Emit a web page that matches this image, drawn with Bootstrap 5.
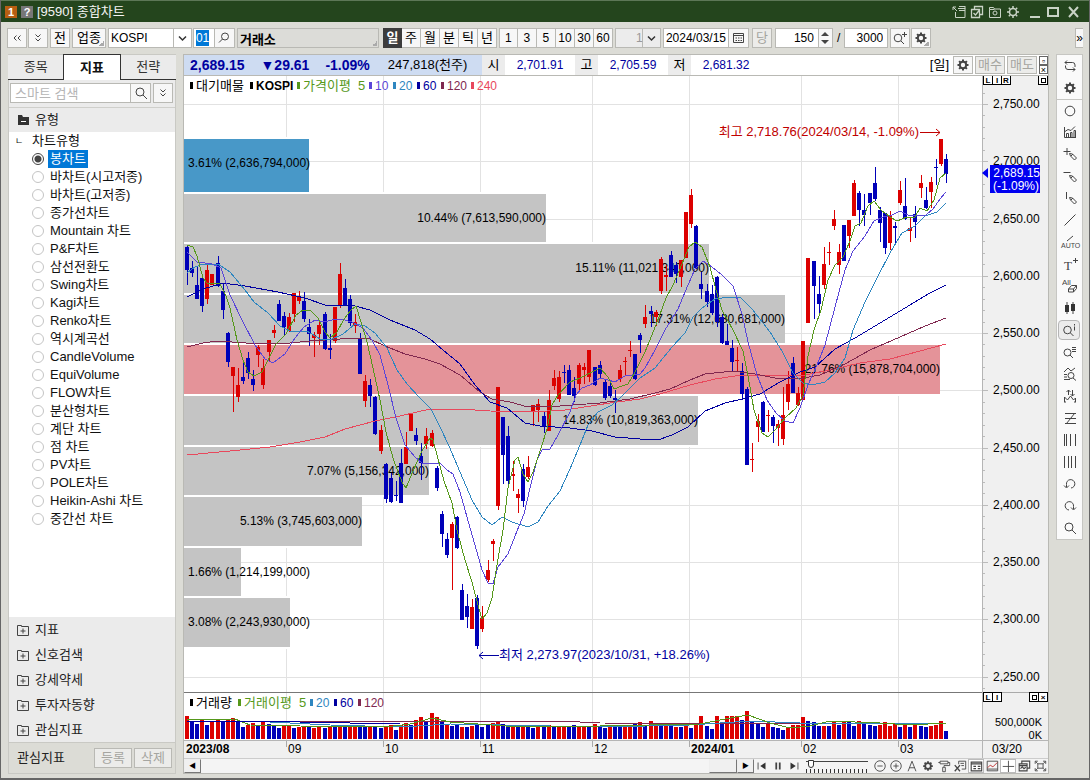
<!DOCTYPE html>
<html lang="ko">
<head>
<meta charset="utf-8">
<meta name="viewport" content="width=device-width, initial-scale=1">
<title>[9590] 종합차트</title>
<link href="https://cdn.jsdelivr.net/npm/bootstrap@5.3.0/dist/css/bootstrap.min.css" rel="stylesheet">
<style>
  :root { --face: #dcdcd6; --line: #b9b9b4; --navy: #0000a0; }
  body { background: var(--face); color: #000; min-height: 100vh; font: 13px/16px "Liberation Sans", "Noto Sans CJK KR", sans-serif; border: solid #666; border-width: 0 1px 2px 1px; }
  button, input, select { font: inherit; color: inherit; border-radius: 0; }
  svg { display: block; }
  .ico { width: 16px; height: 16px; fill: none; stroke: #444; stroke-width: 1; flex: none; }
  .titlebar { background: #24451d; height: 22px; border-top: 1px solid #5d7757; color: #f4f4f4; }
  .titlebar .ico { stroke: #c9d3c6; }
  .wins { gap: 2px; }
  .wins .wide { margin-left: 2px; }
  .titlebar button, .rail button, .plainbtn { background: none; border: 0; padding: 0; display: flex; align-items: center; justify-content: center; }
  .sq { width: 12px; height: 12px; font: bold 11px/12px "Liberation Sans", sans-serif; text-align: center; color: #fff; background: #777; }
  .sq.no { background: #b85f12; }
  .tools { height: 32px; font-size: 12px; padding-left: 6px; }
  .tb { height: 20px; min-width: 20px; padding: 0; border: 1px solid var(--line); background: #f7f7f7; display: flex; align-items: center; justify-content: center; line-height: 16px; flex: none; }
  .tb.ko { font-size: 13px; }
  .tb.slim { min-width: 14px; width: 14px; }
  .tb.joined { border-left: 0; }
  .gap-r1 { margin-right: 1px; }
  .gap-r2 { margin-right: 2px; }
  .gap-r3 { margin-right: 3px; }
  .w30 { width: 30px; } .w38 { width: 38px; } .w44 { width: 44px; } .w66 { width: 66px; }
  .seg .tb { width: 19px; min-width: 19px; border-left-width: 0; }
  .seg .tb:first-child { border-left-width: 1px; }
  .seg .tb.on { background: #3c3c3c; color: #fff; font-weight: bold; border-color: #3c3c3c; }
  .corner { background-image: linear-gradient(135deg, transparent 50%, #aaa 50%); background-size: 5px 5px; background-position: right 1px bottom 1px; background-repeat: no-repeat; }
  .fld { height: 20px; border: 1px solid var(--line); background-color: #fff; padding: 0 2px; min-width: 0; outline: 0; line-height: 16px; }
  .code { width: 22px; }
  .code span { background: #0078d7; color: #fff; }
  .market { width: 142px; background-color: #dcdcd8; font-size: 13px; margin-right: 4px; }
  .drop { appearance: none; background: #fff url("data:image/svg+xml,%3Csvg xmlns='http://www.w3.org/2000/svg' width='18' height='18'%3E%3Cpath d='M.5 0V18' stroke='%23b9b9b4'/%3E%3Cpath d='M6 7.500l3.500 3.500 3.500-3.500' fill='none' stroke='%23333' stroke-width='1.500'/%3E%3C/svg%3E") right center no-repeat; }
  .drop.symbol { width: 84px; }
  .drop.unit { width: 46px; background-color: #ececec; color: #999; padding-left: 20px; }
  .side { width: 168px; flex: none; background: #ebebeb; border: 1px solid #c9c9c4; color: #222; }
  .tabs { height: 26px; border-top: 1px solid #c9c9c4; margin: -1px -1px 0; }
  .tabs button { flex: 1; border: 0; border-bottom: 1px solid #333; background: #ebebeb; padding: 0; color: #333; }
  .tabs .on { background: #fff; border: 1px solid #333; border-bottom: 0; font-weight: bold; color: #111; margin-top: -1px; }
  .find { height: 27px; padding: 3px 1px 0; }
  .find ::placeholder { color: #b5b5b5; opacity: 1; }
  .cat { height: 25px; border-top: 1px solid #cfcfcb; padding-left: 2px; }
  .tree { background: #fff; }
  .tree label, .tree .node { height: 18px; display: flex; align-items: center; line-height: 18px; color: #111; }
  .tree .node span { width: 23px; padding-left: 6px; font-size: 9px; }
  .tree label span { padding: 0 2px; }
  .tree input { appearance: none; width: 12px; height: 12px; border: 1px solid #c4c4c4; border-radius: 50%; margin: 0 4px 0 23px; background: #fff; }
  .tree input:checked { border-color: #444; background: radial-gradient(#444 0 3px, #fff 4px); }
  .tree input:checked + span { background: #0078d7; color: #fff; }
  .fold { height: 25px; background: none; border: 0; padding: 0 6px; color: #222; }
  .sidefoot { height: 31px; background: var(--face); border-top: 1px solid #c9c9c4; padding: 0 3px 0 8px; }
  .dim { color: #a5a5a0; background: #ececea; font-size: 13px; }
  .chartbox { border: 1px solid var(--line); background: #fff; min-width: 0; }
  .quote { height: 21px; font-size: 12px; border-bottom: 1px solid var(--line); }
  .quote .now { background: #cedcf2; color: var(--navy); width: 298px; font-size: 14px; padding-left: 6px; gap: 16px; }
  .quote .qty { color: #000; font-size: 13px; margin-left: 2px; }
  .quote .tag { background: #ececec; width: 23px; text-align: center; font-size: 13px; line-height: 20px; }
  .quote .val { width: 70px; text-align: center; color: var(--navy); }
  .quote .unitlabel { font-size: 13px; }
  .quote .tb { height: 18px; }
  .mini { width: 9px; height: 9px; padding: 0; border: 1px solid #666; background: #fff; font-size: 9px; line-height: 6px; }
  .strip { height: 15px; background: #f4f4f4; border-top: 1px solid #ccc; }
  .sbtn { height: 14px; padding: 0; background: #f0f0f0; border: 1px solid; border-color: #eee #777 #777 #eee; width: 17px; font-size: 7px; line-height: 12px; }
  .thumb { width: 28px; }
  .strip .plainbtn { width: 16px; height: 14px; }
  .strip .ico { width: 14px; height: 14px; }
  .strip .on { outline: 1px solid #bbb; outline-offset: -1px; background: #fff; }
  .zoomer { appearance: none; width: 62px; height: 14px; margin: 0 4px; background: linear-gradient(#444, #444) 0 2px / 100% 1px no-repeat, repeating-linear-gradient(90deg, #333 0 1px, transparent 1px 4px) 0 100% / 100% 4px no-repeat; }
  .zoomer::-webkit-slider-thumb { appearance: none; width: 6px; height: 8px; margin-top: -5px; background: #fff; border: 1px solid #333; border-radius: 0 0 3px 3px; }
  .rail { width: 27px; flex: none; background: #fafafa; border: 1px solid #c6c6c2; }
  .rail button { width: 25px; height: 22px; }
  .rail .on { background: #ececec; border: 1px solid #b5b5b5; border-radius: 4px; width: 22px; height: 20px; margin: 1px; }
  .rail .cut { border-top: 1px solid #c6c6c2; }
  .more { width: 8px; min-width: 8px; margin-right: 6px; border-right: 0; }
  .panes { gap: 7px; padding: 0 6px 0 7px; }
  .plot { width: 100%; height: auto; font-size: 12px; }
  .plot .crisp { shape-rendering: crispEdges; }
  .plot .b { font-weight: bold; }
  .plot .note { font-size: 13px; }
  .plot .tiny { font-size: 8px; font-weight: bold; }
  .plot .vol { font-size: 11px; }
  .ico text { font: 9px "Liberation Sans", sans-serif; fill: #444; stroke: none; }
</style>
</head>
<body class="d-flex flex-column">

<svg width="0" height="0" class="position-absolute" aria-hidden="true">
  <symbol id="gear" viewBox="0 0 16 16"><circle cx="8" cy="8" r="3.200" stroke-width="2"/><path stroke-width="2" d="M8 2.500V5M8 11v2.500M2.500 8H5M11 8h2.500M4.100 4.100l1.700 1.700M10.200 10.200l1.700 1.700M4.100 11.900l1.700-1.700M10.200 5.800l1.700-1.700"/></symbol>
  <symbol id="gearo" viewBox="0 0 16 16"><circle cx="8" cy="8" r="3.500" stroke-width="1.500"/><path stroke-width="1.500" d="M8 2v2M8 12v2M2 8h2M12 8h2M3.800 3.800l1.400 1.400M10.800 10.800l1.400 1.400M3.800 12.200l1.400-1.400M10.800 5.200l1.400-1.400"/></symbol>
  <symbol id="mag" viewBox="0 0 16 16"><circle cx="7" cy="7" r="4"/><path d="M10 10l4 4"/></symbol>
  <symbol id="magl" viewBox="0 0 16 16"><circle cx="9" cy="6.500" r="3.500"/><path d="M6.500 9L3 12.500"/></symbol>
  <symbol id="magp" viewBox="0 0 16 16"><circle cx="6" cy="8" r="3.800"/><path d="M9 11l3 3M10 4.500h5M12.500 2v5"/></symbol>
  <symbol id="dbl" viewBox="0 0 16 16"><path d="M5.500 4.500L8 7l2.500-2.500M5.500 8.500L8 11l2.500-2.500"/></symbol>
  <symbol id="dbll" viewBox="0 0 16 16"><path d="M7.500 5.500L5 8l2.500 2.500M11.500 5.500L9 8l2.500 2.500"/></symbol>
  <symbol id="cal" viewBox="0 0 16 16"><path d="M3.500 3.500h10v9h-10zM3.500 5.500h10M5.500 8h1.500M8 8h1.500M10.500 8H12M5.500 10.500H7M8 10.500h1.500M10.500 10.500H12"/></symbol>
  <symbol id="fplus" viewBox="0 0 16 16"><path d="M2.500 3.500h4v1h7v9h-11zM8 6.500v5M5.500 9h5"/></symbol>
  <symbol id="fminus" viewBox="0 0 16 16"><path fill="#333" stroke="none" d="M3 3h4l1 2h6v8H3z"/><path stroke="#fff" d="M6 9.500h5"/></symbol>
  <symbol id="w1" viewBox="0 0 16 16"><path d="M2 3l4 4M2 6V3h3M7 4.500h7v9H4.500V8M8 6.500h6M14 2v3M8 2.500h6"/></symbol>
  <symbol id="w2" viewBox="0 0 16 16"><path d="M2.500 5.500h8v8h-8zM5.500 5V2.500h8v8H11M4.500 9l2 2 4-5" stroke-width="1.300"/></symbol>
  <symbol id="w3" viewBox="0 0 16 16"><path d="M2.500 5.500v-2h4l1 1.500h6v8.500h-11zM2.500 5.500h5"/><circle cx="8" cy="9" r="2"/></symbol>
  <symbol id="loop" viewBox="0 0 16 16"><path d="M5 2.500L3 4.500l2 2M3 4.500h7.500a2.500 2.500 0 0 1 2.500 2.500v2M11 9.500l2 2-2 2M13 11.500H6A2.500 2.500 0 0 1 3.500 9V7.500"/></symbol>
  <symbol id="circ" viewBox="0 0 16 16"><circle cx="8" cy="8" r="4.800"/></symbol>
  <symbol id="bars" viewBox="0 0 16 16"><path d="M2.500 3v10.500H14M4.500 13V9.500h2V13M8.500 13V8.500h1.500V13M12 13V6.500h1.500V13M3 7.500l3-2 3 1 4-4"/></symbol>
  <symbol id="pen" viewBox="0 0 16 16"><path d="M7.500 7.500l3 .5 4 4-2 2-4-4zM9 10l2-2"/></symbol>
  <symbol id="pp" viewBox="0 0 16 16"><path d="M1.500 5.500h7M5 2v7"/><use href="#pen"/></symbol>
  <symbol id="pm" viewBox="0 0 16 16"><path d="M1.500 4.500h7"/><use href="#pen"/></symbol>
  <symbol id="pi" viewBox="0 0 16 16"><path d="M4.500 2v7"/><use href="#pen"/></symbol>
  <symbol id="diag" viewBox="0 0 16 16"><path d="M2.500 13.500l11-11"/></symbol>
  <symbol id="eraser" viewBox="0 0 16 16"><path d="M6.500 11l3-3.500h5l-3 3.500zM6.500 11v3h5l3-3.500v-3M11.500 11v3"/></symbol>
  <symbol id="candles" viewBox="0 0 16 16"><path d="M5 2v12M11 2v12"/><path fill="#333" stroke="none" d="M3 5h4v7H3zM9 4h4v7H9z"/></symbol>
  <symbol id="mi" viewBox="0 0 16 16"><circle cx="6.500" cy="8" r="3.800"/><path d="M9.500 11l3 3M13.500 4.500v4M13.500 2v1.500"/></symbol>
  <symbol id="ml" viewBox="0 0 16 16"><circle cx="5.500" cy="8.500" r="3.500"/><path d="M8 11l3 3M10 3.500h4M10 5.500h4M10 7.500h4"/></symbol>
  <symbol id="mz" viewBox="0 0 16 16"><path d="M2 6l4-4 3 3 4-3M2 8.500h3M2 11h3M2 13.500h6M11 12l3 2.500"/><circle cx="9" cy="9.500" r="3"/></symbol>
  <symbol id="updn" viewBox="0 0 16 16"><path d="M2.500 14V9l3 3 3-4 3 4 2-2v4M2 14h2M12 14h2M6.500 7V2M4.500 4l2-2 2 2M10.500 2v6M8.500 6l2 2 2-2"/></symbol>
  <symbol id="zz" viewBox="0 0 16 16"><path d="M3 3.500h11M3 13.500h11M3 8.500h11M12.500 3.500l-8 10"/></symbol>
  <symbol id="v4a" viewBox="0 0 16 16"><path d="M2.500 2v12M4.500 2v12M8.500 2v12M13.500 2v12"/></symbol>
  <symbol id="v4b" viewBox="0 0 16 16"><path d="M2.500 2v12M6.500 2v12M9.500 2v12M13.500 2v12"/></symbol>
  <symbol id="rl" viewBox="0 0 16 16"><path d="M4.500 11V8.500A4.200 4.200 0 1 1 9 12M2 9.500L4.500 12 7 9.500"/></symbol>
  <symbol id="rr" viewBox="0 0 16 16"><path d="M11.500 11V8.500A4.200 4.200 0 1 0 7 12M9 9.500l2.500 2.500L14 9.500"/></symbol>
  <symbol id="first" viewBox="0 0 16 16"><path d="M3.500 4v8"/><path fill="#333" stroke="none" d="M12 4v8L6 8z"/></symbol>
  <symbol id="pause" viewBox="0 0 16 16"><path stroke-width="2" d="M6 4v8M10 4v8"/></symbol>
  <symbol id="last" viewBox="0 0 16 16"><path d="M12.500 4v8"/><path fill="#333" stroke="none" d="M4 4v8l6-4z"/></symbol>
  <symbol id="cm" viewBox="0 0 16 16"><circle cx="8" cy="8" r="6"/><path d="M5 8h6"/></symbol>
  <symbol id="cp" viewBox="0 0 16 16"><circle cx="8" cy="8" r="6"/><path d="M5 8h6M8 5v6"/></symbol>
  <symbol id="aa" viewBox="0 0 16 16"><path d="M3.500 14L8 2.500 12.500 14M5 10h6"/></symbol>
  <symbol id="roll" viewBox="0 0 16 16"><path d="M3.500 2.500h9v3h-9zM1.500 4h2M12.500 4h2v3.500H8V9M6.500 9.500h3v5h-3z"/></symbol>
  <symbol id="xl" viewBox="0 0 16 16"><path d="M6.500 6V2.500h8v9H10M8.500 5h4M9.500 7.500h3"/><path stroke-width="1.500" d="M2 7l6 7M8 7l-6 7"/></symbol>
  <symbol id="tbl" viewBox="0 0 16 16"><path d="M2.500 3.500h12v10h-12zM2.500 5.500h12M5 8.500h3M10 8.500h3M5 11h3M10 11h3" stroke-width="1.300"/></symbol>
  <symbol id="pic" viewBox="0 0 16 16"><path d="M2.500 2.500h12v11h-12zM2.500 11.500h12"/><path stroke="#b22" d="M3 10l3-3 3 2 5-5"/></symbol>
  <symbol id="cross" viewBox="0 0 16 16"><path d="M8.500 2v13M2 8.500h13"/></symbol>
  <symbol id="wins" viewBox="0 0 16 16"><path d="M5.500 5V2.500h9v8H12M2.500 5.500h9v8h-9zM2.500 7.500h9M4 11l2-2 2 2 2-1.500" stroke-width="1.300"/></symbol>
  <symbol id="full" viewBox="0 0 16 16"><path d="M5.500 5.500h6v5h-6zM2.500 5.500v-3h3M11.500 2.500h3v3M14.500 10.500v3h-3M5.500 13.500h-3v-3M3 3l2.500 2.500M14 3l-2.500 2.500M14 13l-2.500-2.500M3 13l2.500-2.500"/></symbol>
</svg>

<header class="titlebar d-flex align-items-center ps-1 pe-2">
  <span class="sq no">1</span><span class="sq mx-1">?</span>
  <span>[9590] 종합차트</span>
  <div class="wins ms-auto d-flex align-items-center">
    <button aria-label="분리"><svg class="ico"><use href="#w1"/></svg></button>
    <button aria-label="복사"><svg class="ico"><use href="#w2"/></svg></button>
    <button aria-label="캡처"><svg class="ico"><use href="#w3"/></svg></button>
    <button aria-label="설정"><svg class="ico me-1"><use href="#gearo"/></svg></button>
    <button aria-label="최소화"><svg class="ico" viewBox="0 0 16 16"><path stroke-width="2" d="M3 13h10"/></svg></button>
    <button aria-label="최대화"><svg class="ico" viewBox="0 0 16 16"><path stroke-width="2" d="M3 4h10v8H3z"/></svg></button>
    <button class="wide" aria-label="닫기"><svg class="ico" viewBox="0 0 16 16"><path stroke-width="2" d="M4 3l9 10M13 3L4 13"/></svg></button>
  </div>
</header>

<div class="tools d-flex align-items-center">
  <button class="tb gap-r1" aria-label="이전"><svg class="ico"><use href="#dbll"/></svg></button>
  <button class="tb gap-r2" aria-label="펼치기"><svg class="ico"><use href="#dbl"/></svg></button>
  <button class="tb ko gap-r2">전</button>
  <button class="tb ko corner px-1 gap-r2">업종</button>
  <select class="fld drop symbol gap-r1" aria-label="종목"><option>KOSPI</option></select>
  <label class="fld code d-flex align-items-center"><span>01</span></label>
  <button class="tb joined gap-r2" aria-label="종목검색"><svg class="ico"><use href="#magl"/></svg></button>
  <input class="fld market corner fw-bold" aria-label="시장" value="거래소" readonly>
  <div class="seg d-flex gap-r2" id="periods"></div>
  <div class="seg d-flex gap-r2" id="minutes"></div>
  <select class="fld drop unit gap-r2" aria-label="분 단위"><option>1</option></select>
  <input class="fld w66" aria-label="날짜" value="2024/03/15">
  <button class="tb joined gap-r3" aria-label="달력"><svg class="ico"><use href="#cal"/></svg></button>
  <button class="tb dim gap-r3">당</button>
  <input class="fld w44 text-end pe-1" aria-label="표시 개수" value="150">
  <button class="tb slim joined" aria-label="증감"><svg width="10" height="16" viewBox="0 0 10 16"><path fill="#444" d="M1 6l4-4 4 4zM1 10l4 4 4-4z"/></svg></button>
  <span class="px-1 mx-px">/</span>
  <input class="fld w44 text-end pe-1 gap-r2" aria-label="전체 개수" value="3000">
  <button class="tb gap-r1" aria-label="추가조회"><svg class="ico"><use href="#magp"/></svg></button>
  <button class="tb corner" aria-label="설정"><svg class="ico"><use href="#gear"/></svg></button>
  <button class="tb more ms-auto" aria-label="더보기">»</button>
</div>

<main class="panes d-flex">
  <aside class="side d-flex flex-column">
    <div class="tabs d-flex"><button>종목</button><button class="on">지표</button><button>전략</button></div>
    <div class="find d-flex align-items-start">
      <input class="fld flex-grow-1 px-1" aria-label="스마트 검색" placeholder="스마트 검색">
      <button class="tb joined gap-r2" aria-label="검색"><svg class="ico"><use href="#mag"/></svg></button>
      <button class="tb gap-r1" aria-label="펼치기"><svg class="ico"><use href="#dbl"/></svg></button>
    </div>
    <div class="cat d-flex align-items-center"><svg class="ico mx-1"><use href="#fminus"/></svg><span>유형</span></div>
    <div class="tree flex-grow-1" id="tree"><div class="node"><span>ㄴ</span>차트유형</div></div>
    <div id="folds"></div>
    <div class="sidefoot d-flex align-items-center"><span class="me-auto">관심지표</span><button class="tb dim w38 gap-r2">등록</button><button class="tb dim w38">삭제</button></div>
  </aside>

  <section class="chartbox flex-grow-1">
    <div class="quote d-flex align-items-center">
      <div class="now d-flex align-items-center align-self-stretch"><b>2,689.15</b><b>▼29.61</b><b>-1.09%</b><span class="qty">247,818(천주)</span></div>
      <span class="tag">시</span><span class="val">2,701.91</span>
      <span class="tag">고</span><span class="val">2,705.59</span>
      <span class="tag">저</span><span class="val">2,681.32</span>
      <span class="unitlabel ms-auto me-1">[일]</span>
      <button class="tb gap-r2" aria-label="설정"><svg class="ico"><use href="#gear"/></svg></button>
      <button class="tb dim w30 gap-r2">매수</button>
      <button class="tb dim w30 gap-r2">매도</button>
      <div class="d-flex flex-column"><button class="mini" aria-label="확대">▫</button><button class="mini" aria-label="닫기">×</button></div>
    </div>
    <svg class="plot" id="plot" viewBox="184 76 864 682" role="img" aria-label="KOSPI 일봉 차트"></svg>
    <div class="strip d-flex align-items-center">
      <button class="sbtn" aria-label="왼쪽">◀</button><div class="flex-grow-1"></div>
      <button class="sbtn thumb" aria-label="스크롤"></button><button class="sbtn" aria-label="오른쪽">▶</button>
      <div class="d-flex align-items-center" id="strip1"></div>
      <input type="range" class="zoomer" aria-label="확대 비율" value="3">
      <div class="d-flex align-items-center" id="strip2"></div>
    </div>
  </section>

  <nav class="rail align-self-start" id="rail" aria-label="차트 도구"></nav>
</main>

<script src="https://cdn.jsdelivr.net/npm/bootstrap@5.3.0/dist/js/bootstrap.bundle.min.js"></script>
<script>
const $ = id => document.getElementById(id);
const icon = n => `<svg class="ico"><use href="#${n}"/></svg>`;

$('periods').innerHTML = [...'일주월분틱년'].map((s, i) => `<button class="tb ko${i ? '' : ' on'}">${s}</button>`).join('');
$('minutes').innerHTML = [1, 3, 5, 10, 30, 60].map(s => `<button class="tb">${s}</button>`).join('');
$('tree').innerHTML += ['봉차트', '바차트(시고저종)', '바차트(고저종)', '종가선차트', 'Mountain 차트', 'P&amp;F차트', '삼선전환도', 'Swing차트', 'Kagi차트', 'Renko차트', '역시계곡선', 'CandleVolume', 'EquiVolume', 'FLOW차트', '분산형차트', '계단 차트', '점 차트', 'PV차트', 'POLE차트', 'Heikin-Ashi 차트', '중간선 차트']
  .map((s, i) => `<label><input type="radio" name="kind"${i ? '' : ' checked'}><span>${s}</span></label>`).join('');
$('folds').innerHTML = ['지표', '신호검색', '강세약세', '투자자동향', '관심지표']
  .map(s => `<button class="fold d-flex align-items-center w-100">${icon('fplus')}<span class="ms-1">${s}</span></button>`).join('');
const plain = n => `<button class="plainbtn${/tbl|cross/.test(n) ? ' on' : ''}" aria-label="${n}">${icon(n)}</button>`;
$('strip1').innerHTML = ['first', 'pause', 'last'].map(plain).join('');
$('strip2').innerHTML = ['cm', 'cp', 'aa', 'gear', 'roll', 'xl', 'tbl', 'pic', 'cross', 'wins', 'full'].map(plain).join('');
const special = {
  auto: '<svg class="ico" viewBox="2 0 16 16" overflow="visible"><path d="M7 7l6-5"/><text x="1" y="14" style="font-size:7px">AUTO</text></svg>',
  text: '<svg class="ico" viewBox="0 0 16 16"><text x="2" y="14" style="font:13px Liberation Serif">T</text><path d="M11 4.500h5M13.500 2v5"/></svg>',
  all: '<svg class="ico" viewBox="0 0 16 16"><text x="0" y="7" style="font-size:8px">All</text><use href="#eraser"/></svg>'
};
$('rail').innerHTML = ['loop', 'gear', 'circ', 'bars', 'pp', 'pm', 'pi', 'diag', 'auto', 'text', 'all', 'candles', 'mi', 'ml', 'mz', 'updn', 'zz', 'v4a', 'v4b', 'rl', 'rr', 'mag']
  .map(n => `<button class="${n === 'mi' ? 'on' : n === 'circ' ? 'cut' : ''}" aria-label="${n}">${special[n] || icon(n)}</button>`).join('');

// Candles: colour, body top, body bottom, high, low
const candles = `B247 270 245 285,B268 273 261 277,B285 299 267 299,B278 306 275 312,R270 299 265 304,R274 285 274 285,B263 286 256 287,B291 310 283 319,B333 362 332 367,R367 376 367 412,
R385 397 368 402,B377 381 362 384,B358 373 352 379,B379 385 370 391,R347 355 345 367,R368 385 359 389,R340 352 340 362,R330 333 325 338,B304 321 300 321,B316 327 312 335,
R317 331 313 332,R293 314 293 322,R297 301 291 304,B301 319 292 322,B327 334 319 346,R335 338 332 357,R325 334 320 345,B314 349 312 350,B348 350 334 359,R307 341 307 343,
R274 306 263 308,B288 305 279 305,B299 323 295 326,R322 326 314 333,B338 374 333 374,R381 401 375 407,B385 396 379 407,B397 434 396 435,R430 451 425 454,B464 499 463 503,
B478 502 473 503,B495 496 481 501,B463 503 449 503,R447 464 432 464,R413 431 413 431,B435 441 428 445,B456 463 443 480,R436 444 428 449,R433 446 430 447,B468 488 466 491,
B514 534 511 547,B539 555 533 558,R524 538 522 590,B517 548 516 549,B590 620 584 620,B606 617 594 628,R607 629 599 629,B598 646 595 649,R618 629 606 632,R570 580 560 582,
R541 544 539 561,R387 506 387 510,B417 455 417 484,B436 481 426 485,R474 476 461 491,R494 498 489 513,B469 501 464 507,R467 477 456 479,R405 412 405 426,R404 410 399 422,
B416 427 412 433,R400 431 390 431,R378 386 370 390,R377 399 371 402,B372 373 365 383,B370 395 365 395,B388 396 377 402,R365 384 363 390,R367 370 363 384,R350 377 350 382,
B367 385 367 386,B365 374 361 378,B382 398 379 400,B386 396 380 398,B398 400 390 413,R370 379 365 382,R361 362 357 376,R350 351 341 357,B354 379 354 380,B335 340 333 353,
R317 324 305 328,B311 314 306 327,R312 317 310 326,R259 291 257 294,R275 277 265 291,B255 277 251 277,B265 274 262 283,R260 277 260 287,R212 258 212 258,R195 224 189 228,
B226 268 225 269,B284 289 272 299,B291 302 284 307,B294 313 285 315,B277 322 276 327,B317 343 314 344,B341 345 324 345,B348 362 340 371,R360 361 347 371,B371 394 363 400,
B389 465 387 465,R459 460 443 472,R421 427 414 442,B402 432 401 432,R415 416 410 432,B417 426 415 443,R424 428 420 446,R415 439 387 445,R384 402 371 410,B363 393 357 393,
R393 405 387 406,R341 400 341 400,R258 323 258 323,B261 286 261 319,B294 304 276 314,R264 285 247 289,R252 253 242 265,R219 226 210 230,R252 265 244 274,B225 261 225 261,
R220 236 220 248,R183 216 180 216,B193 210 191 226,B210 215 194 226,B193 203 193 215,B183 199 167 201,B210 223 207 242,B213 248 213 254,R215 243 211 250,B226 228 222 244,
R190 203 181 205,B206 219 178 220,R228 231 218 242,B214 222 206 238,R183 188 175 198,B200 208 187 209,R182 192 177 208,B167 168 159 185,R139 164 139 166,B159 174 154 183`
  .split(',').map(s => { s = s.trim(); return [s[0], ...s.slice(1).split(' ').map(Number)]; });

const volumes = ('R23 B18 B15 R19 B14 R18 R19 B17 R19 R21 B17 B12 R14 R16 B13 R18 B15 B13 B11 R14 R14 B11 R12 R12 B12 R11 R12 B11 R12 B13 R12 B12 R13 R14 B13 B13 R12 B12 B11 R12 R14 B9 R14 ' +
  'R16 B14 R19 R22 B17 R26 R22 B18 R15 B13 B14 R12 B12 R13 B14 B12 B14 R16 R18 B15 B13 R14 B12 R13 B12 B11 R12 B13 R14 B12 R12 R13 B12 B14 R13 R12 B13 R15 B12 B11 R13 B12 B13 R14 R12 B15 R17 B14 R18 R16 B14 R15 B13 R12 B12 R14 B11 R14 ' +
  'R23 B13 B10 R23 B17 R23 R23 R23 B19 R28 B17 B16 B12 R15 B12 B11 B9 R12 R14 R14 R22 B18 B17 B13 R13 B13 R17 B14 R18 B18 B13 R18 B16 B14 B13 R14 R17 R13 R15 B12 R16 B12 R14 B13 B12 R13 R14 R18 B8').split(' ');

const averages = {
  '#e8485c': '187,455 230,451 270,447 300,442 325,437 345,429 375,421 400,416 430,409 460,409 490,411 530,412 565,410 610,403 640,399 660,394 690,385 715,379 735,376 765,375 805,375 830,370 860,363 890,359 920,351 946,344',
  '#80284f': '187,347 203,343 218,341 260,344 290,343 310,341 340,339 355,338 370,339 385,346 405,354 425,359 440,364 460,375 480,392 492,399 510,402 528,407 560,406 600,403 630,399 655,393 670,389 690,380 705,374 733,371 755,374 775,378 790,379 803,378 820,375 845,364 870,350 900,337 925,326 946,318',
  '#0000a0': '187,297 203,289 223,283 245,286 278,292 305,298 325,305 355,306 370,310 390,320 415,330 430,339 443,350 460,364 475,385 490,402 507,408 525,423 540,426 570,428 592,431 615,437 640,439 658,440 672,435 688,427 705,411 725,403 742,399 760,394 780,382 800,372 815,367 835,349 855,338 880,323 910,305 930,293 946,285',
  '#2e86c0': '187,273 195,267 203,264 218,264 230,272 245,290 254,302 268,313 280,326 290,331 307,331 320,339 330,340 343,334 355,324 365,326 375,333 387,348 397,370 407,384 420,398 431,409 440,427 449,446 460,472 472,500 482,517 492,525 502,517 512,522 528,527 538,522 548,506 560,491 570,469 580,445 588,425 598,412 612,405 620,398 640,378 655,368 672,347 685,333 693,317 702,308 715,299 730,297 740,297 752,309 770,332 782,351 793,373 803,383 812,385 825,382 835,373 845,358 853,330 865,302 878,276 890,253 902,233 915,226 925,216 937,212 946,203',
  '#5a46d8': '187,252 197,262 212,264 221,268 230,295 243,322 255,345 265,359 273,363 285,354 295,338 304,327 315,320 325,322 335,319 341,319 352,322 363,328 372,340 380,355 388,385 396,418 405,445 415,457 422,463 440,463 447,470 453,474 460,492 467,517 475,545 482,570 488,583 493,584 498,567 508,554 517,531 524,514 530,488 537,460 542,450 550,449 558,435 570,412 576,395 582,388 590,385 600,378 608,380 615,382 625,376 640,374 645,368 655,350 665,330 678,309 688,285 695,269 703,261 712,267 722,275 733,286 742,314 748,342 757,375 767,400 776,413 785,421 793,423 800,408 808,385 817,365 825,345 835,307 845,270 853,251 865,236 874,221 883,217 892,215 900,211 910,216 918,215 926,215 933,209 940,199 946,192',
  '#55981a': '187,245 193,247 197,256 203,278 207,283 214,283 220,284 226,296 230,308 237,340 243,360 248,372 254,376 262,372 268,360 276,344 286,334 296,315 303,310 311,311 318,318 325,332 330,338 337,332 344,319 351,310 356,306 361,322 367,342 373,368 380,400 386,432 393,458 398,472 403,484 406,488 413,471 422,451 430,438 433,440 437,455 444,481 452,503 457,530 465,560 472,582 478,605 482,619 487,613 492,598 497,565 503,530 508,488 515,460 518,457 523,474 528,482 533,472 541,448 547,429 552,405 558,395 570,382 580,378 590,373 600,368 608,377 614,389 622,386 628,384 634,374 645,352 656,325 666,298 673,285 682,264 689,247 695,242 702,247 710,267 716,290 722,310 733,330 743,351 748,376 754,410 762,433 768,437 775,430 785,418 796,408 803,395 808,356 814,330 821,310 828,280 835,265 843,257 850,241 855,226 861,223 868,206 874,201 881,210 890,217 897,221 907,217 915,217 920,208 927,211 934,200 940,178 946,173'
};
const volumeAverages = {
  '#80284f': '187,721 560,721 600,723 946,724',
  '#2e86c0': '187,721 270,722 330,725 400,727 450,724 600,727 690,725 750,721 800,723 946,723',
  '#55981a': '187,720 235,719 250,725 300,726 385,727 410,724 432,718 450,722 520,727 600,726 700,724 725,719 748,715 770,723 790,728 810,726 830,721 880,723 910,725 946,723',
  '#0000a0': '187,721 300,722 400,724 946,724'
};
// Volume at price: top, height, right edge, label, fill
const profile = [
  [139, 53, 309, '3.61% (2,636,794,000)', '#4898c8'], [194, 48, 546, '10.44% (7,613,590,000)'], [244, 49, 709, '15.11% (11,021,340,000)'],
  [295, 48, 785, '17.31% (12,630,681,000)'], [345, 49, 940, '21.76% (15,878,704,000)', '#e49399'], [396, 49, 698, '14.83% (10,819,363,000)'],
  [447, 48, 429, '7.07% (5,156,342,000)'], [497, 49, 362, '5.13% (3,745,603,000)'], [548, 48, 241, '1.66% (1,214,199,000)'], [598, 49, 290, '3.08% (2,243,930,000)']
];

let g = '';
const rect = (x, y, w, h, f, more = '') => g += `<rect class="crisp" x="${x}" y="${y}" width="${w}" height="${h}" fill="${f}" ${more}/>`;
const text = (x, y, s, f = '#000', anchor = 'start', cls = '') => g += `<text x="${x}" y="${y}" fill="${f}" text-anchor="${anchor}" class="${cls}">${s}</text>`;
const curve = (pts, c) => g += `<polyline class="crisp" points="${pts}" fill="none" stroke="${c}"/>`;
const box = (x, y, s) => { rect(x + .5, y + .5, 9, 9, '#fff', 'stroke="#000"'); text(x + 5, y + 8, s, '#000', 'middle', 'tiny'); };
const frame = (x, y) => { rect(x + .5, y + .5, 9, 9, '#fff', 'stroke="#000"'); rect(x + 3.5, y + 3.5, 4, 4, '#fff', 'stroke="#000"'); };

rect(184, 76, 864, 682, '#fff');
rect(982, 76, 66, 682, '#f0f0f0');
rect(184, 740, 864, 18, '#f0f0f0');
const months = [[286, '09'], [383, '10'], [480, '11'], [592, '12'], [689, '2024/01'], [801, '02'], [898, '03']];
months.forEach(([x]) => rect(x, 76, 1, 664, '#e2e2e2'));
for (let k = 0; k <= 10; k++) rect(184, Math.round(104 + k * 57.25), 798, 1, '#e2e2e2');
profile.forEach(([y, h, r, s, f]) => {
  rect(184, y - 2, r - 184, h + 4, '#fff');
  rect(184, y, r - 184, h, f || '#c4c4c4');
  const wide = r > 340;
  text(wide ? r : 188, y + 28, s, '#000', wide ? 'end' : 'start');
});
candles.forEach(([c, t, b, h, l], i) => {
  const x = Math.round(187 + i * 759 / 149), f = c === 'R' ? '#dc0000' : '#0000b8';
  rect(x, h, 1, Math.max(1, l - h), f);
  rect(x - 2, t, 4, Math.max(1, b - t), f);
});
for (const c in averages) curve(averages[c], c);

volumes.forEach((v, i) => {
  const x = Math.round(187 + i * 759 / (volumes.length - 1)), h = +v.slice(1);
  rect(x - 2, 739 - h, 4, h, v[0] === 'R' ? '#dc0000' : '#0000b8');
});
for (const c in volumeAverages) curve(volumeAverages[c], c);
rect(184, 692, 798, 1, '#777');
rect(982, 692, 66, 1, '#aaa');
rect(184, 740, 864, 1, '#b5b5b5');
rect(982, 76, 1, 682, '#b5b5b5');
for (let k = -2; k <= 51; k++) rect(983, Math.round(104 + k * 11.45), k % 5 ? 2 : 5, 1, '#bbb');
for (let k = 0; k <= 10; k++) text(993, Math.round(108 + k * 57.25), `2,${750 - k * 50}.00`);
g += '<path d="M982 173l6-5v10z" fill="#0000f0"/>';
rect(990, 165, 50, 28, '#0000f0');
text(1040, 177, '2,689.15', '#fff', 'end');
text(1039, 190, '(-1.09%)', '#fff', 'end');

text(919, 136, '최고 2,718.76(2024/03/14, -1.09%)', '#c00000', 'end', 'note');
g += '<path d="M920 132.500h20M936 129l4 3.500-4 3.500" fill="none" stroke="#c00000"/>';
text(499, 659, '최저 2,273.97(2023/10/31, +18.26%)', '#0000a0', 'start', 'note');
g += '<path d="M499 655.500h-20M483 652l-4 3.500 4 3.500" fill="none" stroke="#0000a0"/>';

const legend = (y, items) => items.forEach(([x, s, c, cls = '']) => { rect(x, y - 7, 3, 7, c); text(x + 6, y + 1, s, c, 'start', cls); });
legend(89, [[190, '대기매물', '#000', 'note'], [250, 'KOSPI', '#000', 'b'], [297, '가격이평&#160; 5', '#55981a', 'note'], [369, '10', '#5a46d8'], [393, '20', '#2e86c0'], [417, '60', '#0000a0'], [441, '120', '#80284f'], [471, '240', '#e8485c']]);
legend(706, [[190, '거래량', '#000', 'note'], [238, '거래이평&#160; 5', '#55981a', 'note'], [310, '20', '#2e86c0'], [334, '60', '#0000a0'], [358, '120', '#80284f']]);
box(983, 75, 'L'); box(992, 75, 'I'); box(1001, 75, 'R'); frame(1038, 75);
box(983, 692, 'L'); box(992, 692, 'I'); frame(1029, 692); box(1038, 692, '×');
text(1042, 726, '500,000K', '#000', 'end', 'vol');
text(1042, 739, '0K', '#000', 'end', 'vol');
text(186, 753, '2023/08', '#000', 'start', 'b');
months.forEach(([x, s]) => { rect(x, 741, 1, 6, '#aaa'); text(x + 2, 753, s, '#000', 'start', s.length > 2 ? 'b' : ''); });
text(992, 753, '03/20');
$('plot').innerHTML = g;
</script>
</body>
</html>
